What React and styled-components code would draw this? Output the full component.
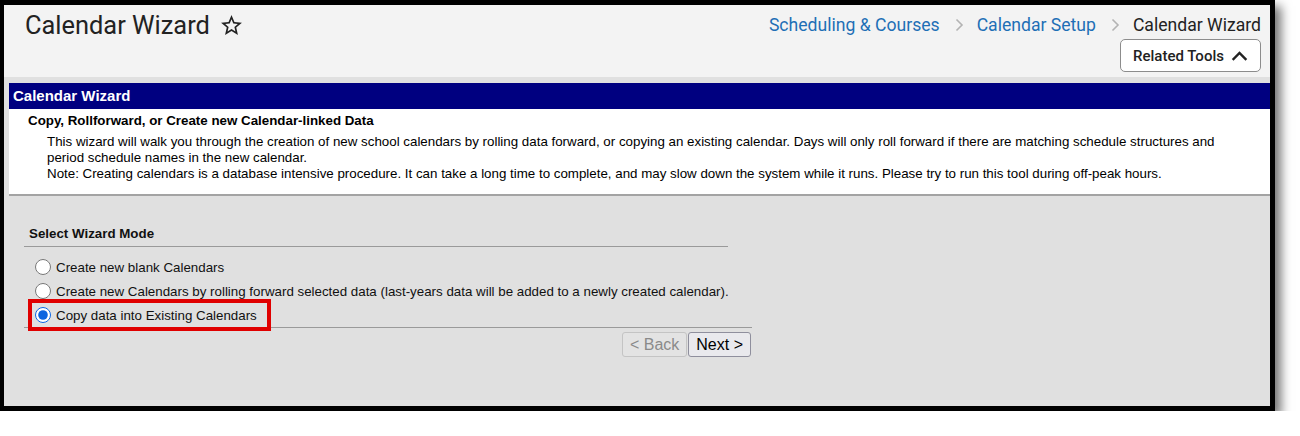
import React, { useState } from "react";
import styled, { createGlobalStyle } from "styled-components";

const GlobalStyle = createGlobalStyle`
    html, body {
        margin: 0;
        padding: 0;
        background: #fff;
    }
    body {
        font-family: "Liberation Sans", Arial, sans-serif;
    }
`

const Frame = styled.div`
    width: 1275px;
    height: 411px;
    box-sizing: border-box;
    border: 5px solid #000;
    border-left-width: 4px;
    box-shadow: 6px 6px 10px rgba(0, 0, 0, 0.55);
    display: flex;
    flex-direction: column;
    overflow: hidden;
`
const Header = styled.div`
    height: 72px;
    flex: none;
    background-color: #f3f3f3;
    display: flex;
    justify-content: space-between;
    padding: 3px 9px 0 21px;
    box-sizing: border-box;
`
const Title = styled.h1`
    margin: 0;
    font-family: Roboto, "Liberation Sans", sans-serif;
    font-weight: 400;
    font-size: 25.4px;
    color: #222;
    display: flex;
    align-items: center;
    gap: 9px;
    height: 33px;
`
const StarButton = styled.span`
    display: inline-flex;
    color: #222;
    margin-top: 2px;
`
const HeaderRight = styled.div`
    display: flex;
    flex-direction: column;
    align-items: flex-end;
`
const Crumbs = styled.nav`
    display: flex;
    align-items: center;
    height: 31px;
    box-sizing: border-box;
    padding-top: 2px;
    font-family: Roboto, "Liberation Sans", sans-serif;
    font-size: 17.6px;
`
const Crumb = styled.a`
    color: ${props => props.current ? "#222" : "#1e6fb6"};
    text-decoration: none;
    cursor: ${props => props.current ? "default" : "pointer"};
`
const CrumbSep = styled.span`
    display: inline-flex;
    color: #b3b3b3;
    margin: 0 13px 0 15px;
`
const RelatedButton = styled.button`
    height: 33px;
    width: 141px;
    box-sizing: border-box;
    border: 1px solid #8c8c8c;
    border-radius: 5px;
    background: #fff;
    display: flex;
    align-items: center;
    gap: 6px;
    padding: 0 0 0 12px;
    font-family: Roboto, "Liberation Sans", sans-serif;
    font-weight: 500;
    font-size: 15px;
    color: #222;
    cursor: pointer;
`
const Content = styled.div`
    flex: 1;
    background-color: #e0e0e0;
    display: flex;
    flex-direction: column;
`
const Panel = styled.section`
    margin: 6px 0 0 5px;
    background: #fff;
    border-bottom: 2px solid #a3a3a3;
`
const PanelTitle = styled.div`
    background-color: #000080;
    color: #fff;
    font-weight: 700;
    font-size: 15px;
    height: 26px;
    line-height: 26px;
    padding-left: 4px;
`
const PanelBody = styled.div`
    padding: 4px 0 12px 19px;
    font-size: 13.33px;
    color: #000;
`
const Heading = styled.div`
    font-weight: 700;
    line-height: 16px;
`
const Intro = styled.div`
    margin: 5px 0 0 19px;
    max-width: 1190px;
    line-height: 16px;
`
const Wizard = styled.div`
    margin: 30px 0 0 20px;
    width: 728px;
    font-size: 13.33px;
    color: #111;
`
const WizardTitle = styled.div`
    width: 699px;
    padding: 0 0 4px 5px;
    font-weight: 700;
    line-height: 16px;
    border-bottom: 1px solid #9a9a9a;
`
const Options = styled.div`
    padding-top: 8px;
    border-bottom: 1px solid #9a9a9a;
    display: flex;
    flex-direction: column;
    align-items: flex-start;
`
const Option = styled.label`
    display: inline-flex;
    align-items: center;
    height: 24px;
    margin-left: 8px;
    padding-right: ${props => props.highlight ? "10px" : "0"};
    outline: ${props => props.highlight ? "4px solid #e00000" : "none"};
    cursor: pointer;
`
const Radio = styled.input`
    width: 16px;
    height: 16px;
    margin: 0 5px 0 3px;
    accent-color: #0a64e0;
`
const Actions = styled.div`
    display: flex;
    justify-content: flex-end;
    gap: 1px;
    margin-top: 4px;
    padding-right: 1px;
`
const NavButton = styled.button`
    height: 25px;
    padding: 0 7px;
    border-radius: 3px;
    border: 1px solid ${props => props.disabled ? "#c4c4c4" : "#8f8f9d"};
    background: ${props => props.disabled ? "#e3e3e3" : "#e9e9ed"};
    color: ${props => props.disabled ? "#8a8a8a" : "#000"};
    font-family: "Liberation Sans", Arial, sans-serif;
    font-size: 16px;
    cursor: ${props => props.disabled ? "default" : "pointer"};
`

function StarOutline() {
    return (
        <svg width="25" height="25" viewBox="0 0 24 24" fill="currentColor">
            <path d="M22 9.24l-7.19-.62L12 2 9.19 8.63 2 9.24l5.46 4.73L5.82 21 12 17.27 18.18 21l-1.63-7.03L22 9.24zM12 15.4l-3.76 2.27 1-4.28-3.32-2.88 4.38-.38L12 6.1l1.71 4.04 4.38.38-3.32 2.88 1 4.28L12 15.4z" />
        </svg>
    )
}

function ChevronRight() {
    return (
        <svg width="9" height="14" viewBox="0 0 9 14" fill="none" stroke="currentColor" strokeWidth="1.6">
            <polyline points="1.5,1.5 7,7 1.5,12.5" />
        </svg>
    )
}

function ChevronUp() {
    return (
        <svg width="19" height="12" viewBox="0 0 19 12" fill="none" stroke="#222" strokeWidth="2.4" strokeLinecap="square">
            <polyline points="3.5,9 9.5,3 15.5,9" />
        </svg>
    )
}

const MODES = [
    { id: "blank", label: "Create new blank Calendars" },
    { id: "rollforward", label: "Create new Calendars by rolling forward selected data (last-years data will be added to a newly created calendar)." },
    { id: "copy", label: "Copy data into Existing Calendars" },
]

export default function App() {
    const [mode, setMode] = useState("copy");

    return (
        <>
            <GlobalStyle />
            <Frame>
                <Header>
                    <Title>
                        Calendar Wizard
                        <StarButton><StarOutline /></StarButton>
                    </Title>
                    <HeaderRight>
                        <Crumbs>
                            <Crumb>Scheduling &amp; Courses</Crumb>
                            <CrumbSep><ChevronRight /></CrumbSep>
                            <Crumb>Calendar Setup</Crumb>
                            <CrumbSep><ChevronRight /></CrumbSep>
                            <Crumb current>Calendar Wizard</Crumb>
                        </Crumbs>
                        <RelatedButton>
                            Related Tools
                            <ChevronUp />
                        </RelatedButton>
                    </HeaderRight>
                </Header>
                <Content>
                    <Panel>
                        <PanelTitle>Calendar Wizard</PanelTitle>
                        <PanelBody>
                            <Heading>Copy, Rollforward, or Create new Calendar-linked Data</Heading>
                            <Intro>
                                This wizard will walk you through the creation of new school calendars by rolling data forward, or copying an existing calendar. Days will only roll forward if there are matching schedule structures and period schedule names in the new calendar.
                                <br />
                                Note: Creating calendars is a database intensive procedure. It can take a long time to complete, and may slow down the system while it runs. Please try to run this tool during off-peak hours.
                            </Intro>
                        </PanelBody>
                    </Panel>
                    <Wizard>
                        <WizardTitle>Select Wizard Mode</WizardTitle>
                        <Options>
                            {MODES.map(m => (
                                <Option key={m.id} highlight={m.id === "copy"}>
                                    <Radio
                                        type="radio"
                                        name="mode"
                                        checked={mode === m.id}
                                        onChange={() => setMode(m.id)}
                                    />
                                    {m.label}
                                </Option>
                            ))}
                        </Options>
                        <Actions>
                            <NavButton disabled>&lt; Back</NavButton>
                            <NavButton>Next &gt;</NavButton>
                        </Actions>
                    </Wizard>
                </Content>
            </Frame>
        </>
    )
}
